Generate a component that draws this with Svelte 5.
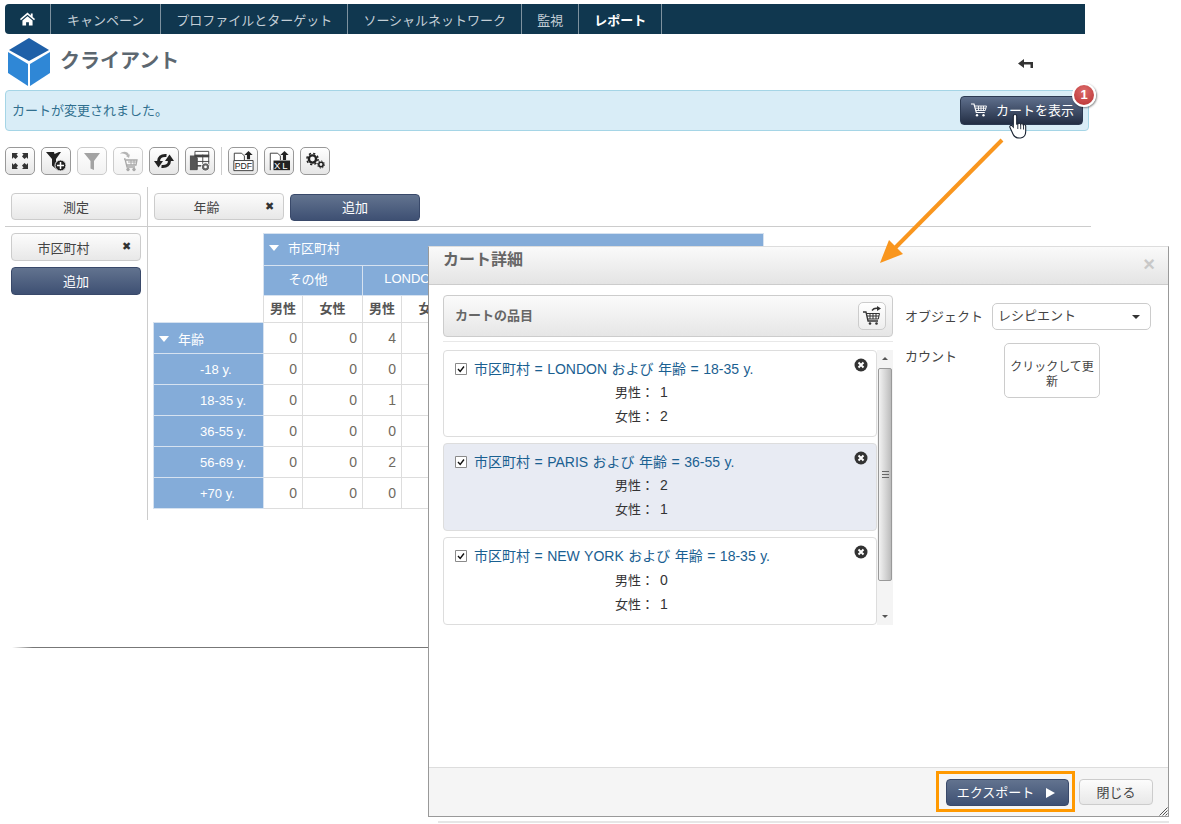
<script lang="ts">
  const navItems = ['キャンペーン', 'プロファイルとターゲット', 'ソーシャルネットワーク', '監視', 'レポート'];

  // the dialog covers everything to the right of LONDON, so those cells stay empty
  const fill = (values: (string | number)[]) => [...values, ...Array(10 - values.length).fill('')];

  const cities = ['その他', 'LONDON', '', '', ''];
  const sexes = fill(['男性', '女性', '男性', '女性']);
  const totals = fill([0, 0, 4]);

  const rows = [
    { label: '-18 y.', values: fill([0, 0, 0]) },
    { label: '18-35 y.', values: fill([0, 0, 1]) },
    { label: '36-55 y.', values: fill([0, 0, 0]) },
    { label: '56-69 y.', values: fill([0, 0, 2]) },
    { label: '+70 y.', values: fill([0, 0, 0]) },
  ];

  const cartItems = [
    { text: '市区町村 = LONDON および 年齢 = 18-35 y.', men: 1, women: 2, selected: false },
    { text: '市区町村 = PARIS および 年齢 = 36-55 y.', men: 2, women: 1, selected: true },
    { text: '市区町村 = NEW YORK および 年齢 = 18-35 y.', men: 0, women: 1, selected: false },
  ];
</script>

<div class="page">
  <nav class="nav">
    <a class="nav-item home" href="#home" aria-label="ホーム">
      <svg viewBox="0 0 16 14" width="15" height="14">
        <path d="M8 0 0 7l1 1.300L8 2.400l7 5.900L16 7l-2.500-2.100V1h-2v2.200z" fill="#fff" />
        <path d="M2.600 8.600 8 4l5.400 4.600V14H9.500v-3.600h-3V14H2.600z" fill="#fff" />
      </svg>
    </a>
    {#each navItems as item, i}
      <a class="nav-item" class:active={i === navItems.length - 1} href="#item">{item}</a>
    {/each}
  </nav>

  <header class="title-row">
    <svg class="logo" viewBox="0 0 44 50" width="44" height="50">
      <path d="M22 1 42 13 22 24 2 13z" fill="#1f60a8" />
      <path d="M1 15 21 27V49L1 36z" fill="#2f87d6" />
      <path d="M43 15 23 27V49L43 36z" fill="#2f87d6" />
    </svg>
    <h1>クライアント</h1>
    <svg class="back" viewBox="0 0 15 10" width="15" height="10">
      <path d="M0 4.500 6 0v3h9v6h-2.500V5.500H6V9z" fill="#333" />
    </svg>
  </header>

  <div class="alert">
    <span class="alert-text">カートが変更されました。</span>
    <button class="btn-dark show-cart">
      <svg viewBox="0 0 16 14" width="16" height="14" fill="none" stroke="#fff" stroke-width=".9">
        <path d="M0 1h3l2.300 8.500h8.500" stroke-width="1.200" />
        <path d="M4 3h11.500l-1.200 4.500H5M4.500 5.200h10.500M7.500 3v4.500M10 3v4.500M12.500 3v4.500" />
        <circle cx="6" cy="12.300" r="1.200" fill="#fff" stroke="none" />
        <circle cx="12.500" cy="12.300" r="1.200" fill="#fff" stroke="none" />
      </svg>
      カートを表示
    </button>
    <span class="badge">1</span>
    <svg class="hand" viewBox="0 0 18 26" width="18" height="26">
      <path d="M6 1.500c1 0 1.700.7 1.700 1.700v8l1.100-.2c.2-1 2.600-1 2.800.2.500-.8 2.500-.7 2.700.6.700-.5 2.400-.2 2.400 1.200v5.500c0 3-1.500 6-5 6.500-4 .4-6.300-.8-7.500-3.500L1 14.500c-.8-1.500 1-2.900 2.300-1.700l1 1.200V3.200C4.300 2.200 5 1.500 6 1.500z" fill="#fff" stroke="#1b2433" stroke-width="1.100" />
      <path d="M8.800 11v5M11.700 11.200v5M14.500 12v4.500" stroke="#1b2433" stroke-width=".9" />
    </svg>
  </div>

  <div class="toolbar">
    <button class="tool" aria-label="全画面">
      <svg viewBox="0 0 22 22" fill="#333"><path d="M3 3h6L7.500 4.500 9 6.500 6.500 9 4.500 7.200 3 9zM19 3h-6l1.500 1.500L13 6.500 15.500 9l2-1.800L19 9zM3 19h6l-1.500-1.500L9 15.500 6.500 13l-2 1.800L3 13zM19 19h-6l1.500-1.500-1.500-2 2.500-2.500 2 1.800L19 13z" /></svg>
    </button>
    <button class="tool" aria-label="フィルターを追加">
      <svg viewBox="0 0 22 22"><path d="M1 2h8l.5 2L14 2h2l-5 7v10l-4-3.500V9z" fill="#222" /><circle cx="15.500" cy="15.500" r="5.500" fill="#222" stroke="#eee" /><path d="M15.500 12v7M12 15.500h7" stroke="#fff" stroke-width="1.500" /></svg>
    </button>
    <button class="tool off" aria-label="フィルター">
      <svg viewBox="0 0 22 22"><path d="M3 3h16l-6 8v9l-3.500-1.500V11z" fill="#a3a3a3" /></svg>
    </button>
    <button class="tool off" aria-label="カートに追加">
      <svg viewBox="0 0 22 22" fill="none" stroke="#a8a8a8"><path d="M3 4c2-3 8-3 9 1l1-1-1 4-3-2 1 0C9 4 6 3 3 4z" fill="#b5b5b5" stroke="none" /><path d="M7 9h1l2 8h8M9 10h11l-1 5h-9" stroke-width="1.300" /><path d="M11 12h8M14 10v5M17 10v5" /><circle cx="11" cy="19.500" r="1.300" fill="#a8a8a8" /><circle cx="17" cy="19.500" r="1.300" fill="#a8a8a8" /></svg>
    </button>
    <button class="tool" aria-label="更新">
      <svg viewBox="0 0 22 22"><path d="M13.500 5.500C8 5 5.500 7.500 5.500 11.500" fill="none" stroke="#222" stroke-width="3" /><path d="M1 11h9l-4.500 6.500z" fill="#222" /><path d="M8.500 16.500c5.500.5 8-2 8-6" fill="none" stroke="#222" stroke-width="3" /><path d="M21 11h-9l4.500-6.500z" fill="#222" /></svg>
    </button>
    <button class="tool" aria-label="テーブル設定">
      <svg viewBox="0 0 24 24"><path d="M6.500 1.500h15v16h-15z" fill="#fff" stroke="#444" /><path d="M1 6h8v16H1z" fill="#555" /><path d="M6 5h16v3H6z" fill="#444" /><path d="M9 8.500v13M15 5v13M9 12.500h13M9 17h13" stroke="#444" /><circle cx="18" cy="18.500" r="4.500" fill="#666" stroke="#fff" /><circle cx="18" cy="18.500" r="1.500" fill="#fff" /></svg>
    </button>
    <span class="tool-sep"></span>
    <button class="tool" aria-label="PDFをエクスポート">
      <svg viewBox="0 0 24 24"><path d="M2.500 11V3.500h8l3 3V11" fill="#fff" stroke="#333" /><path d="M2 11.500h21v11H2z" fill="#fff" stroke="#333" /><path d="M18 1l4.500 4.500h-2.800V10h-3.400V5.500H13.500z" fill="#222" /><text x="3" y="21" textLength="19" lengthAdjust="spacingAndGlyphs" class="doc-text">PDF</text></svg>
    </button>
    <button class="tool" aria-label="Excelをエクスポート">
      <svg viewBox="0 0 24 24"><path d="M2.500 22V3.500h8l3 3V11" fill="#fff" stroke="#333" /><path d="M6 11.500h18V22H6z" fill="#222" /><path d="M18 1l4.500 4.500h-2.800V11h-3.400V5.500H13.500z" fill="#222" /><text x="15" y="20.500" text-anchor="middle" class="doc-text light">XL</text></svg>
    </button>
    <button class="tool" aria-label="設定">
      <svg viewBox="0 0 22 22" fill="none" stroke="#222"><circle cx="8.500" cy="9" r="3.600" stroke-width="2.400" /><circle cx="8.500" cy="9" r="5.600" stroke-width="1.500" stroke-dasharray="2.200 2.200" /><circle cx="17" cy="14.500" r="2.200" stroke-width="1.600" /><circle cx="17" cy="14.500" r="3.500" stroke-width="1" stroke-dasharray="1.400 1.300" /></svg>
    </button>
  </div>

  <section class="pivot">
    <div class="pivot-corner">
      <button class="btn-light wide">測定</button>
    </div>
    <div class="pivot-cols">
      <button class="btn-light wide chip">年齢<span class="chip-x">✖</span></button>
      <button class="btn-dark wide">追加</button>
    </div>
    <div class="pivot-rows">
      <button class="btn-light wide chip">市区町村<span class="chip-x">✖</span></button>
      <button class="btn-dark wide">追加</button>
    </div>
    <div class="pivot-data">
      <table>
        <colgroup>
          <col class="col-head" />
          {#each cities as _}
            <col class="col-m" />
            <col class="col-f" />
          {/each}
        </colgroup>
        <thead>
          <tr>
            <th class="blank" rowspan="3"></th>
            <th class="blue group" colspan="10"><i class="caret"></i>市区町村</th>
          </tr>
          <tr>
            {#each cities as city}
              <th class="blue" colspan="2">{city}</th>
            {/each}
          </tr>
          <tr>
            {#each sexes as sex}
              <th class="sex">{sex}</th>
            {/each}
          </tr>
        </thead>
        <tbody>
          <tr>
            <th class="blue group"><i class="caret"></i>年齢</th>
            {#each totals as value}
              <td>{value}</td>
            {/each}
          </tr>
          {#each rows as row}
            <tr>
              <th class="blue age">{row.label}</th>
              {#each row.values as value}
                <td>{value}</td>
              {/each}
            </tr>
          {/each}
        </tbody>
      </table>
    </div>
  </section>

  <div class="page-end"></div>

  <div class="dialog">
    <div class="dialog-title">
      <h2>カート詳細</h2>
      <span class="dialog-close">×</span>
    </div>
    <div class="dialog-body">
      <div class="cart">
        <div class="cart-head">
          <span class="cart-title">カートの品目</span>
          <button class="cart-action" aria-label="カートを送信">
            <svg viewBox="0 0 20 20" width="20" height="20" fill="none" stroke="#333">
              <path d="M1 6h3l2 9h10" stroke-width="1.300" />
              <path d="M4.500 7.500h13l-1.200 5.500H6M5 10h12M8 7.500V13M11 7.500V13M14 7.500V13" />
              <path d="M10 4.500c1.500-2 4-2.500 6-2" stroke-width="1.300" />
              <path d="M15 0l4 2.500-4 2.500z" fill="#333" stroke="none" />
              <circle cx="8" cy="17.500" r="1.300" fill="#333" stroke="none" />
              <circle cx="14.500" cy="17.500" r="1.300" fill="#333" stroke="none" />
            </svg>
          </button>
        </div>
        <div class="cart-rule"></div>
        <div class="cart-scroll">
          <ul class="cart-list">
            {#each cartItems as item}
              <li class="cart-item" class:selected={item.selected}>
                <div class="cart-line">
                  <svg class="check" viewBox="0 0 12 12" width="12" height="12">
                    <path d="M.5.500h11v11H.500z" fill="#fff" stroke="#8a8a8a" />
                    <path d="M3 6l2.200 2.500L9 3.500" fill="none" stroke="#111" stroke-width="1.400" />
                  </svg>
                  <span>{item.text}</span>
                </div>
                <button class="remove" aria-label="削除">
                  <svg viewBox="0 0 14 14" width="14" height="14">
                    <circle cx="7" cy="7" r="6.500" fill="#333" />
                    <path d="M4.500 4.500l5 5M9.500 4.500l-5 5" stroke="#fff" stroke-width="2" />
                  </svg>
                </button>
                <div class="stat"><span>男性：</span><b>{item.men}</b></div>
                <div class="stat"><span>女性：</span><b>{item.women}</b></div>
              </li>
            {/each}
          </ul>
          <div class="scrollbar">
            <span class="scroll-up"></span>
            <div class="thumb"><span></span></div>
            <span class="scroll-down"></span>
          </div>
        </div>
      </div>
      <div class="side">
        <div class="side-row">
          <span class="side-label">オブジェクト</span>
          <div class="select">レシピエント<i></i></div>
        </div>
        <div class="side-row count">
          <span class="side-label">カウント</span>
          <button class="refresh">クリックして更新</button>
        </div>
      </div>
    </div>
    <div class="dialog-foot">
      <div class="highlight">
        <button class="btn-dark export">エクスポート<i></i></button>
      </div>
      <button class="btn-light close">閉じる</button>
      <svg class="grip" viewBox="0 0 10 10" width="10" height="10" stroke="#555">
        <path d="M9.500 1.500l-8 8M9.500 4.500l-5 5M9.500 7.500l-2 2" />
      </svg>
    </div>
  </div>

  <svg class="arrow" viewBox="0 0 130 130" width="130" height="130">
    <path d="M126 4 16 115" stroke="#f9961e" stroke-width="4" fill="none" />
    <path d="M4 127 13 104 27 118z" fill="#f9961e" />
  </svg>
</div>

<style>
  :global(body) {
    margin: 0;
    background: #fff;
  }

  .page {
    position: relative;
    width: 1181px;
    height: 824px;
    overflow: hidden;
    padding: 4px 0 0 5px;
    box-sizing: border-box;
    font-family: 'Liberation Sans', 'Noto Sans CJK JP', sans-serif;
    font-size: 13px;
    color: #444;
  }

  button {
    font: inherit;
    cursor: pointer;
  }

  .nav {
    display: flex;
    width: 1080px;
    height: 30px;
    background: #10374f;
    border-radius: 4px 0 0 4px;
  }

  .nav-item {
    display: flex;
    align-items: center;
    padding: 0 15px;
    color: #c3ced6;
    text-decoration: none;
    border-right: 1px solid #7e929f;
    white-space: nowrap;
  }

  .nav-item:nth-child(2) {
    padding: 0 16px;
  }

  .nav-item.home {
    width: 46px;
    padding: 0;
    justify-content: center;
    box-sizing: border-box;
  }

  .nav-item.active {
    color: #fff;
    font-weight: 700;
  }

  .title-row {
    display: flex;
    align-items: flex-start;
    width: 1080px;
    height: 56px;
    position: relative;
  }

  .logo {
    margin: 3px 0 0 2px;
  }

  h1 {
    margin: 13px 0 0 9px;
    font-size: 20px;
    line-height: 28px;
    font-weight: 700;
    color: #5c6770;
  }

  .back {
    margin: 25px 52px 0 auto;
  }

  .alert {
    position: relative;
    display: flex;
    align-items: center;
    justify-content: space-between;
    width: 1084px;
    height: 41px;
    box-sizing: border-box;
    padding: 0 5px 0 6px;
    background: #d9edf7;
    border: 1px solid #a5d5e6;
    border-radius: 4px;
    color: #31708f;
  }

  .alert-text {
    margin-top: -2px;
  }

  .btn-dark {
    border: 1px solid #39496a;
    border-radius: 4px;
    background: linear-gradient(#62738f, #3e5073);
    color: #fff;
  }

  .btn-light {
    border: 1px solid #ccc;
    border-radius: 4px;
    background: linear-gradient(#fcfcfc, #e8e8e8);
    color: #444;
  }

  .show-cart {
    display: flex;
    align-items: center;
    gap: 9px;
    width: 123px;
    height: 29px;
    padding: 0 0 2px 10px;
    border-color: #2c3a52;
    background: linear-gradient(#5f708d, #232e44);
  }

  .badge {
    position: absolute;
    top: -8px;
    right: -8px;
    width: 20px;
    height: 20px;
    border: 2px solid #fff;
    border-radius: 50%;
    background: radial-gradient(circle at 50% 30%, #dc6a6a, #b93232);
    box-shadow: 1px 1px 2px rgba(0, 0, 0, 0.45);
    color: #fff;
    font-size: 13px;
    font-weight: 700;
    line-height: 20px;
    text-align: center;
  }

  .hand {
    position: absolute;
    top: 22px;
    left: 1003px;
  }

  .toolbar {
    display: flex;
    align-items: center;
    gap: 6px;
    margin-top: 16px;
    height: 28px;
  }

  .tool {
    display: flex;
    align-items: center;
    justify-content: center;
    width: 30px;
    height: 28px;
    padding: 0;
    border: 1px solid #999;
    border-radius: 5px;
    background: linear-gradient(#fff, #e6e6e6);
  }

  .tool svg {
    width: 22px;
    height: 22px;
  }

  .tool.off {
    border-color: #ccc;
    background: linear-gradient(#fff, #f2f2f2);
  }

  .tool-sep {
    width: 1px;
    height: 28px;
    background: #ccc;
  }

  .doc-text {
    font-size: 10.500px;
    fill: #222;
    font-family: 'Liberation Sans', sans-serif;
  }

  .doc-text.light {
    fill: #fff;
    letter-spacing: 2px;
  }

  .pivot {
    display: grid;
    grid-template-columns: 143px 943px;
    grid-template-rows: 40px 293px;
    margin-top: 12px;
  }

  .pivot-corner,
  .pivot-cols {
    border-bottom: 1px solid #ccc;
  }

  .pivot-corner,
  .pivot-rows {
    padding-left: 6px;
    padding-right: 6px;
    border-right: 1px solid #ccc;
  }

  .pivot-corner {
    padding-top: 6px;
  }

  .pivot-cols {
    display: flex;
    align-items: flex-start;
    gap: 6px;
    padding: 6px 0 0 6px;
  }

  .pivot-rows {
    display: flex;
    flex-direction: column;
    gap: 6px;
    padding-top: 6px;
  }

  .wide {
    position: relative;
    width: 130px;
    height: 27px;
    padding: 0;
    text-align: center;
    flex: none;
  }

  .chip {
    padding-right: 25px;
  }

  .wide.btn-dark {
    padding-bottom: 2px;
  }

  .pivot-cols .btn-dark {
    margin-top: 1px;
  }

  .pivot-rows .wide {
    height: 28px;
  }

  .chip-x {
    position: absolute;
    right: 9px;
    top: 5px;
    font-size: 11px;
    line-height: 14px;
    color: #333;
  }

  .pivot-data {
    padding: 6px 0 0 5px;
  }

  table {
    width: 610px;
    table-layout: fixed;
    border-collapse: collapse;
  }

  .col-head {
    width: 110px;
  }

  .col-m {
    width: 39px;
  }

  .col-f {
    width: 60px;
  }

  .col-f:last-child {
    width: 65px;
  }

  tr {
    height: 31px;
  }

  thead tr:nth-child(1) {
    height: 32px;
  }

  thead tr:nth-child(2) {
    height: 30px;
  }

  thead tr:nth-child(3) {
    height: 27px;
  }

  thead tr:nth-child(1) th.blue {
    padding-bottom: 4px;
  }

  thead tr:nth-child(2) th {
    padding-bottom: 5px;
  }

  thead tr:nth-child(2) th:first-child {
    padding-right: 10px;
  }

  th,
  td {
    padding: 0;
    border: 1px solid #ddd;
    font-weight: 400;
  }

  .blank {
    border: 0;
  }

  .blue {
    background: #84acd9;
    border-color: #d6e2f0;
    color: #fff;
    text-align: center;
  }

  .blue.group {
    text-align: left;
    padding-left: 5px;
  }

  .blue.age {
    text-align: left;
    padding-left: 46px;
  }

  .caret {
    display: inline-block;
    width: 0;
    height: 0;
    margin-right: 9px;
    border-left: 5px solid transparent;
    border-right: 5px solid transparent;
    border-top: 6px solid #fff;
    vertical-align: 2px;
  }

  .sex {
    padding-bottom: 3px;
    font-weight: 700;
    color: #555;
  }

  td {
    padding-right: 5px;
    text-align: right;
    color: #6f6a60;
    font-size: 14px;
  }

  .page-end {
    width: 416px;
    height: 1px;
    margin: 127px 0 0 7px;
    background: linear-gradient(90deg, #fff, #777 5%);
  }

  .arrow {
    position: absolute;
    left: 876px;
    top: 136px;
  }

  .dialog {
    position: absolute;
    left: 428px;
    top: 246px;
    display: flex;
    flex-direction: column;
    width: 741px;
    height: 571px;
    box-sizing: border-box;
    background: #fff;
    border: 1px solid #999;
    border-top-color: #ddd;
  }

  .dialog::after {
    content: '';
    position: absolute;
    left: 9px;
    right: -1px;
    bottom: -7px;
    height: 2px;
    background: #e6e6e6;
  }

  .dialog-title {
    display: flex;
    align-items: center;
    justify-content: space-between;
    height: 37px;
    flex: none;
    padding: 0 13px 0 14px;
    background: linear-gradient(#fafafa, #e4e4e4);
    border-bottom: 1px solid #ccc;
  }

  h2 {
    margin: 0 0 15px;
    font-size: 16px;
    font-weight: 700;
    color: #666;
  }

  .dialog-close {
    margin-top: -3px;
    font-size: 20px;
    font-weight: 700;
    color: #c8c8c8;
  }

  .dialog-body {
    display: flex;
    flex: 1;
    padding: 10px 0 0 14px;
  }

  .cart {
    width: 450px;
  }

  .cart-head {
    display: flex;
    align-items: center;
    justify-content: space-between;
    height: 42px;
    box-sizing: border-box;
    padding: 0 6px 0 11px;
    border: 1px solid #ccc;
    border-radius: 4px;
    background: linear-gradient(#fbfbfb, #e6e6e6);
    font-weight: 700;
    color: #666;
  }

  .cart-title {
    margin-top: -4px;
  }

  .cart-action {
    display: flex;
    align-items: center;
    justify-content: center;
    width: 28px;
    height: 28px;
    padding: 0;
    border: 1px solid #ccc;
    border-radius: 5px;
    background: linear-gradient(#fff, #eee);
  }

  .cart-rule {
    height: 1px;
    margin: 4px 0 8px;
    background: #e8e8e8;
  }

  .cart-scroll {
    display: flex;
    height: 275px;
  }

  .cart-list {
    display: flex;
    flex-direction: column;
    gap: 6px;
    width: 434px;
    margin: 0;
    padding: 0;
    list-style: none;
  }

  .cart-item {
    position: relative;
    height: 88px;
    box-sizing: border-box;
    padding: 8px 0 0 11px;
    border: 1px solid #ddd;
    border-radius: 4px;
    background: #fff;
  }

  .cart-item:first-child {
    height: 87px;
  }

  .cart-item.selected {
    background: #e8ebf3;
  }

  .cart-line {
    display: flex;
    align-items: center;
    gap: 7px;
    height: 18px;
    font-size: 14px;
    word-spacing: 0.6px;
    color: #1a6091;
  }

  .check {
    margin-top: 2px;
    flex: none;
  }

  .remove {
    position: absolute;
    top: 7px;
    right: 8px;
    display: flex;
    padding: 0;
    border: 0;
    background: none;
  }

  .stat {
    display: flex;
    margin: 7px 0 0 160px;
    height: 17px;
    line-height: 17px;
    color: #333;
  }

  .cart-item:nth-child(3) .remove + .stat {
    margin-top: 8px;
  }

  .stat span {
    width: 45px;
  }

  .stat b {
    font-size: 14px;
    font-weight: 400;
  }

  .scrollbar {
    display: flex;
    flex-direction: column;
    width: 16px;
    background: #f4f4f4;
  }

  .scroll-up,
  .scroll-down {
    display: block;
    width: 0;
    height: 0;
    margin: 7px auto;
    border-left: 3px solid transparent;
    border-right: 3px solid transparent;
  }

  .scroll-up {
    border-bottom: 3px solid #555;
  }

  .scroll-down {
    margin-top: auto;
    border-top: 3px solid #555;
  }

  .thumb {
    display: flex;
    align-items: center;
    justify-content: center;
    width: 14px;
    height: 213px;
    margin: 1px 0 0 1px;
    box-sizing: border-box;
    border: 1px solid #999;
    border-radius: 2px;
    background: linear-gradient(90deg, #f2f2f2, #d2d2d2 60%, #bbb);
  }

  .thumb span {
    width: 7px;
    height: 7px;
    background: repeating-linear-gradient(#666 0 1px, transparent 1px 3px);
  }

  .side {
    flex: 1;
    padding: 8px 17px 0 12px;
  }

  .side-row {
    display: flex;
    align-items: center;
    gap: 12px;
  }

  .side-label {
    width: 75px;
    flex: none;
    white-space: nowrap;
    margin-top: -3px;
  }

  .select {
    position: relative;
    width: 159px;
    height: 27px;
    box-sizing: border-box;
    padding-left: 5px;
    border: 1px solid #ccc;
    border-radius: 5px;
    line-height: 23px;
  }

  .select i {
    position: absolute;
    right: 10px;
    top: 11px;
    border-left: 4px solid transparent;
    border-right: 4px solid transparent;
    border-top: 4px solid #333;
  }

  .count {
    align-items: flex-start;
    margin-top: 13px;
    gap: 24px;
  }

  .count .side-label {
    margin-top: 3px;
  }

  .refresh {
    width: 96px;
    height: 55px;
    padding: 8px 1px 0;
    border: 1px solid #ccc;
    border-radius: 5px;
    background: #fff;
    color: #444;
    font-size: 12px;
    line-height: 15px;
  }

  .dialog-foot {
    position: relative;
    display: flex;
    align-items: center;
    justify-content: flex-end;
    gap: 4px;
    height: 48px;
    flex: none;
    padding-right: 15px;
    background: #f5f5f5;
    border-top: 1px solid #ddd;
  }

  .highlight {
    display: flex;
    margin-top: -1px;
    padding: 5px 3px 3px 7px;
    border: 3px solid #ff9900;
    background: #f5f5f5;
  }

  .export {
    position: relative;
    width: 123px;
    height: 27px;
    padding: 0 24px 2px 0;
  }

  .export i {
    position: absolute;
    right: 13px;
    top: 8px;
    border-top: 5px solid transparent;
    border-bottom: 5px solid transparent;
    border-left: 9px solid #fff;
  }

  .close {
    width: 74px;
    height: 26px;
    padding: 0 0 2px;
  }

  .grip {
    position: absolute;
    right: 0;
    bottom: 0;
  }
</style>
